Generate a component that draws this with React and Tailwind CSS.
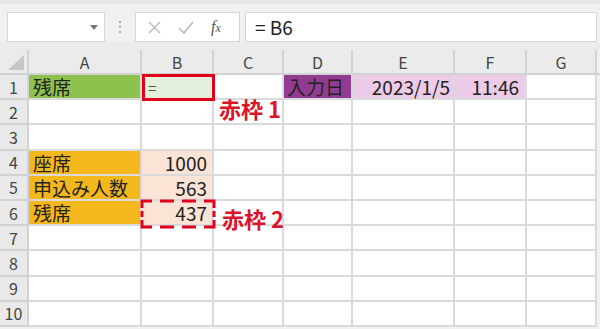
import React from 'react';

const font = { fontFamily: '"Noto Sans CJK JP", "Noto Sans", sans-serif' };

// column header letters
const COLS = ['A', 'B', 'C', 'D', 'E', 'F', 'G'];

const Cell = ({ className = '', children }) => (
    <div className={`h-[25.2px] border-r-2 border-b-2 border-[#dadada] flex items-center text-[19px] leading-none text-[#222] overflow-visible whitespace-nowrap ${className}`}>
        {children}
    </div>
);

const RowHead = ({ n }) => (
    <div className="h-[25.2px] bg-[#e9e9e9] border-r-2 border-b-2 border-[#d2d2d2] flex items-center justify-center text-[16px] text-[#444]">
        {n}
    </div>
);

const Toolbar = () => (
    <div className="h-[42px] bg-[#f1f1f1] border-t-[4px] border-[#e6e6e6] flex items-start pt-[8px] pl-[7px]">
        {/* Name box */}
        <div className="w-[98px] h-[30px] bg-white border border-[#d6d6d6] flex items-center justify-end pr-[6px]">
            <svg width="8" height="5" viewBox="0 0 8 5"><path d="M0 0h8L4 5z" fill="#777" /></svg>
        </div>
        {/* drag dots */}
        <div className="w-[30px] h-[30px] flex flex-col items-center justify-center gap-[3px]">
            <span className="w-[2px] h-[2px] bg-[#aaa]" />
            <span className="w-[2px] h-[2px] bg-[#aaa]" />
            <span className="w-[2px] h-[2px] bg-[#aaa]" />
        </div>
        {/* cancel / enter / fx */}
        <div className="w-[105px] h-[30px] bg-white border border-[#d6d6d6] flex items-center pl-[12px] gap-[17px]">
            <svg width="13" height="13" viewBox="0 0 13 13"><path d="M1 1l11 11M12 1L1 12" stroke="#b9b9b9" strokeWidth="1.4" /></svg>
            <svg width="16" height="13" viewBox="0 0 16 13"><path d="M1 7l5 5L15 1" stroke="#b9b9b9" strokeWidth="1.6" fill="none" /></svg>
            <span className="text-[16px] italic text-[#555] leading-none" style={{ fontFamily: '"Liberation Serif", serif' }}>f<span className="text-[12px]">x</span></span>
        </div>
        {/* formula input */}
        <div className="ml-[5px] w-[352px] h-[30px] bg-white border border-[#d6d6d6] flex items-center pl-[9px] text-[19px] text-[#222]" style={font}>
            = B6
        </div>
    </div>
);

export default function App() {
    const rows = [1, 2, 3, 4, 5, 6, 7, 8, 9, 10];

    const cellFor = (r, c) => {
        if (r === 1) {
            if (c === 'A') return <Cell className="bg-[#8dc24f] pl-[4px]">残席</Cell>;
            if (c === 'B') return <Cell className="bg-[#e2efda] relative"><span className="absolute left-[6px] bottom-[3px] text-[15px] text-[#555]">=</span></Cell>;
            if (c === 'D') return <Cell className="bg-[#923c91] pl-[3px] text-[#1a1a1a]">入力日</Cell>;
            if (c === 'E') return <Cell className="bg-[#ebcbe8] justify-end pr-[3px]">2023/1/5</Cell>;
            if (c === 'F') return <Cell className="bg-[#ebcbe8] justify-end pr-[6px]">11:46</Cell>;
        }
        if (r >= 4 && r <= 6) {
            const labels = { 4: '座席', 5: '申込み人数', 6: '残席' };
            const nums = { 4: '1000', 5: '563', 6: '437' };
            if (c === 'A') return <Cell className="bg-[#f5b81c] pl-[4px]">{labels[r]}</Cell>;
            if (c === 'B') return <Cell className="bg-[#fbe3d5] justify-end pr-[5px]">{nums[r]}</Cell>;
        }
        return <Cell />;
    };

    return (
        <div className="w-[600px] h-[329px] bg-[#f1f1f1] overflow-hidden relative" style={font}>
            <Toolbar />

            {/* sheet */}
            <div className="pt-[8px] bg-[#ebebeb]">
                <div className="grid grid-cols-[29px_113px_72px_70px_69px_102px_72px_70px_1fr] bg-white">
                    {/* header row */}
                    <div className="h-[25px] bg-[#ebebeb] border-r-2 border-b-2 border-[#d2d2d2] flex items-end justify-end pr-[3px] pb-[3px]">
                        <svg width="16" height="15" viewBox="0 0 16 15"><path d="M16 0v15H0z" fill="#c6c6c6" /></svg>
                    </div>
                    {COLS.map(c => (
                        <div key={c} className="h-[25px] bg-[#ebebeb] border-r-2 border-b-2 border-[#d2d2d2] flex items-center justify-center text-[16px] text-[#444]">
                            {c}
                        </div>
                    ))}
                    <div className="h-[25px] bg-[#f1f1f1] border-b-2 border-[#d2d2d2]" />

                    {rows.map(r => (
                        <React.Fragment key={r}>
                            <RowHead n={r} />
                            {COLS.map(c => <React.Fragment key={c}>{cellFor(r, c)}</React.Fragment>)}
                            <div className="h-[25.2px] bg-[#f1f1f1]" />
                        </React.Fragment>
                    ))}
                </div>
            </div>

            {/* red frame 1 on B1 */}
            <div className="absolute left-[142px] top-[74px] w-[73px] h-[27px] border-[3px] border-[#e0001b] pointer-events-none" />
            <div className="absolute left-[219px] top-[97px] text-[22px] font-bold text-[#d9152c] leading-none">赤枠 1</div>

            {/* red frame 2 on B6 (dashed, corners drawn as L shapes) */}
            <svg className="absolute left-[140px] top-[199px] pointer-events-none" width="76" height="30" viewBox="0 0 76 30">
                <path
                    d="M12 2H2V9 M64 2H74V9 M2 21V28H12 M74 21V28H64 M20 2H34 M42 2H56 M20 28H34 M42 28H56 M2 12V18 M74 12V18"
                    fill="none" stroke="#e0001b" strokeWidth="3" strokeLinejoin="miter"
                />
            </svg>
            <div className="absolute left-[222px] top-[207px] text-[22px] font-bold text-[#d9152c] leading-none">赤枠 2</div>
        </div>
    );
}
